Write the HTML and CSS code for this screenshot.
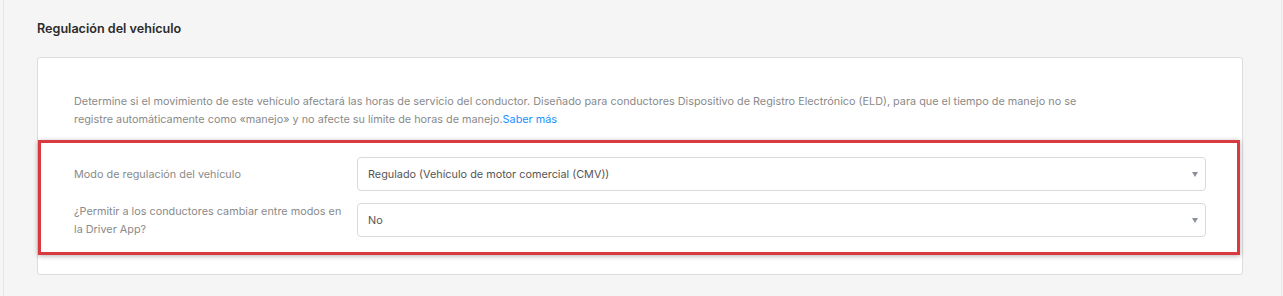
FILE: index.html
```html
<!DOCTYPE html>
<html lang="es">
<head>
    <meta charset="UTF-8">
    <meta name="viewport" content="width=device-width, initial-scale=1.0">
    <title>Regulación del vehículo</title>
    <link rel="stylesheet" href="styles.css">
</head>
<body>

<div class="page">
    <h2 class="section-title">Regulación del vehículo</h2>

    <div class="card">
        <p class="description">
            Determine si el movimiento de este vehículo afectará las horas de servicio del conductor. Diseñado para conductores Dispositivo de Registro Electrónico (ELD), para que el tiempo de manejo no se registre automáticamente como «manejo» y no afecte su límite de horas de manejo.<a href="#" class="link">Saber más</a>
        </p>

        <div class="highlight">
            <div class="form-row">
                <label class="field-label" for="mode">Modo de regulación del vehículo</label>
                <div class="select" id="mode">
                    <span>Regulado (Vehículo de motor comercial (CMV))</span>
                    <span class="caret"></span>
                </div>
            </div>
            <div class="form-row">
                <label class="field-label" for="switch">¿Permitir a los conductores cambiar entre modos en la Driver App?</label>
                <div class="select" id="switch">
                    <span>No</span>
                    <span class="caret"></span>
                </div>
            </div>
        </div>
    </div>
</div>

</body>
</html>
```

FILE: styles.css
```css
* {
    box-sizing: border-box;
}
body {
    margin: 0;
    background-color: #f5f5f5;
    font-family: Inter, "Noto Sans", sans-serif;
    height: 296px;
    overflow: hidden;
}
.page {
    margin: 0 1px 0 3px;
    height: 296px;
    border-left: 1px solid #e6e6e6;
    border-right: 1px solid #e6e6e6;
    padding: 20px 38px 0 33px;
}
.section-title {
    margin: 0 0 19px;
    font-size: 12.6px;
    font-weight: 600;
    line-height: 18px;
    color: #2b2b2b;
}
.card {
    background-color: #fff;
    border: 1px solid #dcdcdc;
    border-radius: 3px;
    padding: 34px 2px 19px 0;
}
.description {
    margin: 0 0 12px;
    padding: 0 160px 0 36px;
    font-size: 10.85px;
    line-height: 18px;
    color: #8a8a8a;
}
.link {
    color: #1890ff;
    text-decoration: none;
}
.highlight {
    border: 3px solid #d93a3f;
    box-shadow: 0 1px 5px rgba(0, 0, 0, 0.3);
    padding: 14px 31px 14px 33px;
    display: flex;
    flex-direction: column;
    gap: 11px;
}
.form-row {
    display: flex;
    align-items: center;
}
.field-label {
    width: 276px;
    margin-right: 7px;
    font-size: 10.85px;
    line-height: 18px;
    color: #8a8a8a;
}
.select {
    flex: 1;
    height: 34px;
    border: 1px solid #d9d9d9;
    border-radius: 4px;
    display: flex;
    align-items: center;
    justify-content: space-between;
    padding: 0 7px 0 10px;
    font-size: 10.85px;
    color: #555;
}
.caret {
    width: 0;
    height: 0;
    border-left: 3.5px solid transparent;
    border-right: 3.5px solid transparent;
    border-top: 5px solid #8a9099;
}
```
